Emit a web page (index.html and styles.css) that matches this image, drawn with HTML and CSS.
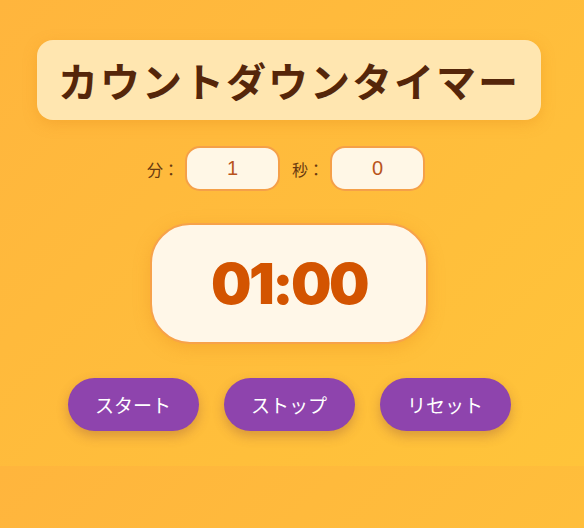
FILE: index.html
```html
<!DOCTYPE html>
<html lang="ja">
<head>
<meta charset="utf-8">
<title>カウントダウンタイマー</title>
<link rel="stylesheet" href="styles.css">
</head>
<body>
<main class="app">
  <h1 class="title">カウントダウンタイマー</h1>
  <div class="inputs">
    <label class="field-label" for="min">分：</label>
    <input class="num" id="min" type="number" value="1">
    <label class="field-label" for="sec">秒：</label>
    <input class="num" id="sec" type="number" value="0">
  </div>
  <div class="display">01:00</div>
  <div class="buttons">
    <button class="btn">スタート</button>
    <button class="btn">ストップ</button>
    <button class="btn">リセット</button>
  </div>
</main>
</body>
</html>
```

FILE: styles.css
```css
html {
  margin: 0;
}
body {
  margin: 0;
  background: linear-gradient(135deg, #ffb53d 0%, #ffc43a 100%);
  font-family: "Noto Sans CJK JP", "Noto Sans", sans-serif;
}
.app {
  display: flex;
  flex-direction: column;
  align-items: center;
  padding: 40px 23px 35px 17px;
}
.title {
  margin: 0;
  width: 504px;
  box-sizing: border-box;
  text-align: center;
  padding: 11px 0;
  line-height: 58px;
  font-size: 40px;
  font-weight: 700;
  letter-spacing: 2px;
  color: #55260a;
  background: #ffe6b0;
  border-radius: 16px;
  box-shadow: 0 4px 14px rgba(230, 140, 30, 0.35);
}
.inputs {
  margin-top: 26px;
  display: flex;
  align-items: center;
  margin-right: 6px;
}
.field-label {
  font-size: 16px;
  color: #6a3a10;
  margin-right: 6px;
}
.num {
  width: 95px;
  height: 45px;
  box-sizing: border-box;
  border: 2px solid #f5a048;
  border-radius: 15px;
  background: #fff7e6;
  text-align: center;
  font-family: "Liberation Sans", "Noto Sans", sans-serif;
  font-size: 20px;
  color: #b9541b;
  padding: 0;
  -moz-appearance: textfield;
  appearance: textfield;
  outline: none;
}
.num::-webkit-inner-spin-button,
.num::-webkit-outer-spin-button {
  -webkit-appearance: none;
  margin: 0;
}
.num + .field-label {
  margin-left: 12px;
}
.display {
  margin-top: 32px;
  width: 278px;
  height: 121px;
  box-sizing: border-box;
  border: 2px solid #f7a24a;
  border-radius: 40px;
  background: #fff7e8;
  display: flex;
  align-items: center;
  justify-content: center;
  font-family: "Inter", "Noto Sans", sans-serif;
  font-weight: 900;
  font-size: 57px;
  letter-spacing: -2.5px;
  color: #d35400;
  box-shadow: 0 4px 16px rgba(230, 140, 30, 0.35);
}
.buttons {
  margin-top: 34px;
  display: flex;
  gap: 25px;
}
.btn {
  width: 131px;
  height: 53px;
  border: none;
  border-radius: 27px;
  background: #8e44ad;
  color: #ffffff;
  font-family: "Noto Sans CJK JP", "Noto Sans", sans-serif;
  font-size: 19px;
  padding: 0;
  box-shadow: 0 5px 12px rgba(120, 60, 60, 0.3);
}
```
